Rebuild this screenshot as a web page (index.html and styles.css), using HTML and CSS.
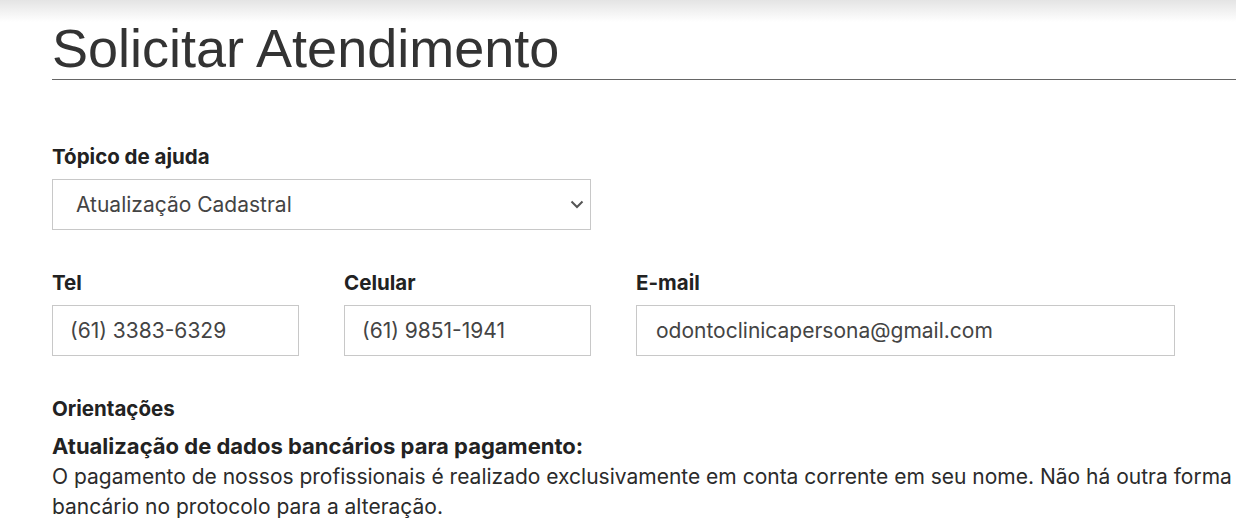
FILE: index.html
```html
<!DOCTYPE html>
<html lang="pt-BR">
<head>
    <meta charset="UTF-8">
    <meta name="viewport" content="width=device-width, initial-scale=1.0">
    <title>Solicitar Atendimento</title>
    <link rel="stylesheet" href="styles.css">
</head>
<body>
    <div class="topshadow"></div>
    <div class="page">
        <h1 class="title">Solicitar Atendimento</h1>

        <form class="form">
            <div class="field span2">
                <label for="topico">Tópico de ajuda</label>
                <div class="select-wrap">
                    <select id="topico">
                        <option>Atualização Cadastral</option>
                    </select>
                    <svg class="chevron" width="14" height="9" viewBox="0 0 14 9">
                        <path d="M1.5 1.5 L7 7 L12.5 1.5" fill="none" stroke="#555" stroke-width="2"/>
                    </svg>
                </div>
            </div>
            <div class="row-break"></div>

            <div class="field">
                <label for="tel">Tel</label>
                <input type="text" id="tel" value="(61) 3383-6329">
            </div>
            <div class="field">
                <label for="cel">Celular</label>
                <input type="text" id="cel" value="(61) 9851-1941">
            </div>
            <div class="field span2">
                <label for="email">E-mail</label>
                <input type="text" id="email" class="email" value="odontoclinicapersona@gmail.com">
            </div>
        </form>

        <div class="orientacoes">
            <h2>Orientações</h2>
            <h3>Atualização de dados bancários para pagamento:</h3>
            <p>O pagamento de nossos profissionais é realizado exclusivamente em conta corrente em seu nome. Não há outra forma de pagamento. Envie o comprovante<br>bancário no protocolo para a alteração.</p>
        </div>
    </div>
</body>
</html>
```

FILE: styles.css
```css
* {
    margin: 0;
    padding: 0;
    box-sizing: border-box;
}

html, body {
    overflow: hidden;
}

body {
    background-color: #fff;
    font-family: 'Inter', 'Noto Sans', sans-serif;
    color: #2b2b2b;
}

.topshadow {
    height: 22px;
    background: linear-gradient(to bottom, #e4e4e4, #fff);
}

.page {
    width: 1500px;
    padding-left: 52px;
}

.title {
    margin-top: -4px;
    font-family: 'Liberation Sans', Arial, sans-serif;
    font-weight: normal;
    font-size: 54px;
    line-height: 61px;
    color: #333;
    border-bottom: 1px solid #666;
}

.form {
    display: grid;
    grid-template-columns: repeat(4, 247px);
    column-gap: 45px;
    row-gap: 41px;
    width: 1123px;
    margin-top: 65px;
}

.span2 {
    grid-column: span 2;
}

.row-break {
    grid-column: span 2;
}

.field label {
    display: block;
    font-size: 20.5px;
    line-height: 24px;
    font-weight: 700;
    color: #222;
    margin-bottom: 10px;
}

.field input,
.field select {
    display: block;
    width: 100%;
    height: 51px;
    border: 1px solid #c8c8c8;
    border-radius: 0;
    background: #fff;
    font-family: 'Inter', sans-serif;
    font-size: 21px;
    color: #444;
    padding: 0 17px;
    outline: none;
}

.field input.email {
    padding-left: 19px;
}

.select-wrap {
    position: relative;
}

.field select {
    appearance: none;
    -webkit-appearance: none;
    padding-left: 23px;
}

.chevron {
    position: absolute;
    right: 7px;
    top: 21px;
}

.orientacoes {
    margin-top: 41px;
}

.orientacoes h2 {
    font-size: 20.5px;
    line-height: 24px;
    font-weight: 700;
    color: #222;
}

.orientacoes h3 {
    margin-top: 11px;
    font-size: 22px;
    line-height: 28px;
    font-weight: 700;
    color: #222;
}

.orientacoes p {
    margin-top: 2px;
    font-size: 21px;
    line-height: 29.5px;
    white-space: nowrap;
    color: #2b2b2b;
}
```
